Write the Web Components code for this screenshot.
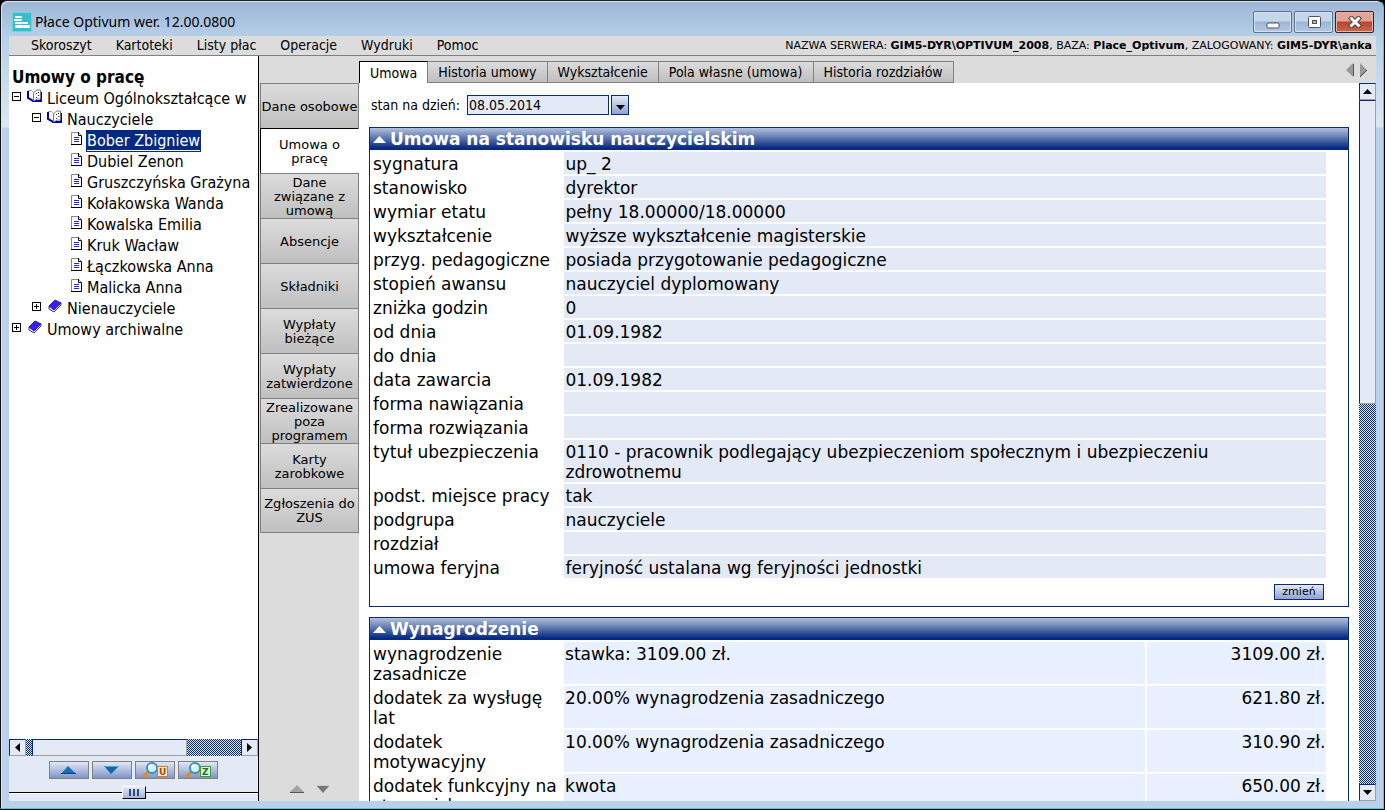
<!DOCTYPE html>
<html lang="pl">
<head>
<meta charset="utf-8">
<title>Płace Optivum</title>
<style>
    html, body {
        height: 100%;
        margin: 0;
    }
    body {
        --navy: #062a82;
        --pale: #e4e9f6;
        --row: #e4e9f6;
        --grey: #dcdcdc;
        --line: #808080;
        background: #000;
        color: #000;
        font-family: "DejaVu Sans", Verdana, sans-serif;
        overflow: hidden;
    }
</style>
</head>
<body>
<payroll-app></payroll-app>

<script>
const define = (name, html, connected) => {
    customElements.define(name, class extends HTMLElement {
        constructor() {
            super();
            this.attachShadow({ mode: 'open' });
            this.shadowRoot.innerHTML = html;
        }

        connectedCallback() {
            if (connected) connected.call(this, this.shadowRoot);
        }
    });
};

// Window frame with the title bar
define('app-window', `
    <style>
    :host {
        display: flex;
        flex-direction: column;
        box-sizing: border-box;
        height: calc(100vh - 1px);
        margin-right: 1px;
        padding: 0 7px 7px 8px;
        border: 1px solid;
        border-color: #222 #3fd0e6 #3fd0e6 #111;
        border-radius: 7px 7px 0 0;
        background: linear-gradient(#9cb6d5, #b6cfe9 36px, #dbe7f4 126px, #b9d1ea 127px);
        box-shadow: inset 1px 1px 0 #d6e4f3;
    }
    header {
        display: flex;
        align-items: center;
        height: 35px;
        padding: 6px 2px 0 3px;
        box-sizing: border-box;
        flex: none;
    }
    h1 {
        flex: 1;
        margin: 0 0 0 3px;
        font: 14px/20px "Noto Sans", sans-serif;
    }
    .buttons {
        display: flex;
        gap: 2px;
    }
    button {
        width: 39px;
        height: 22px;
        padding: 0;
        display: grid;
        place-items: center;
        border: 1px solid #5d7592;
        border-radius: 2px;
        background: linear-gradient(#c4d6ea 0 45%, #9ab5d4 50%, #b5cbe4);
        box-shadow: inset 0 0 0 1px #d3e1f0;
    }
    button.close {
        border-color: #4d1a1c;
        background: linear-gradient(#e1a499 0 45%, #b9432c 50%, #c8694f);
        box-shadow: inset 0 0 0 1px #e8b3a8;
    }
    main {
        flex: 1;
        min-height: 0;
        display: flex;
        flex-direction: column;
        background: #fff;
    }
    </style>
    <header>
        <svg width="20" height="20" viewBox="0 0 20 20">
            <rect width="20" height="20" fill="#6fd3da"/>
            <rect x="1" y="1" width="18" height="18" fill="#39bdc9"/>
            <g fill="#fff">
                <rect x="3" y="4" width="7" height="2" rx="1"/>
                <rect x="2" y="7" width="8" height="2" rx="1"/>
                <rect x="3" y="10" width="7" height="2" rx="1"/>
                <rect x="3" y="13" width="8" height="3" rx="1"/>
                <rect x="10" y="10" width="6" height="2" rx="1"/>
                <rect x="11" y="13" width="7" height="3" rx="1"/>
            </g>
        </svg>
        <h1><slot name="title"></slot></h1>
        <div class="buttons">
            <button aria-label="Minimalizuj"><svg width="14" height="14" viewBox="0 0 14 14"><rect x="1" y="8" width="12" height="5" rx="1" fill="#fff" stroke="#4c5564"/></svg></button>
            <button aria-label="Maksymalizuj"><svg width="14" height="12" viewBox="0 0 14 12"><rect x="1.5" y=".5" width="12" height="11" rx="1" fill="#fff" stroke="#4c5564"/><rect x="5.5" y="4.5" width="4" height="3" fill="#9ab5d4" stroke="#4c5564"/></svg></button>
            <button class="close" aria-label="Zamknij"><svg width="14" height="12" viewBox="0 0 14 12"><path d="M3.5 2.500l7 7M10.5 2.500l-7 7" stroke="#4c4048" stroke-width="5" stroke-linecap="square"/><path d="M3.5 2.500l7 7M10.5 2.500l-7 7" stroke="#fff" stroke-width="3" stroke-linecap="square"/></svg></button>
        </div>
    </header>
    <main><slot></slot></main>
`);

define('menu-bar', `
    <style>
    :host {
        display: flex;
        align-items: center;
        justify-content: space-between;
        flex: none;
        height: 19px;
        padding: 0 4px 0 10px;
        border-bottom: 1px solid var(--line);
        background: var(--grey);
    }
    nav { display: flex; }
    button {
        padding: 0 12px;
        border: 0;
        background: none;
        font: 14px/19px "DejaVu Sans Condensed", Tahoma, sans-serif;
        color: inherit;
    }
    .status { font: 11px/20px "DejaVu Sans", Verdana, sans-serif; white-space: nowrap; }
    </style>
    <nav></nav>
    <div class="status"><slot></slot></div>
`, function (root) {
    root.querySelector('nav').innerHTML = this.getAttribute('items').split('|')
        .map(item => `<button>${item}</button>`).join('');
});

// One line of the tree: level, kind (open, closed, leaf) and the name in the slot
const treeIcons = {
    open: `<svg width="15" height="14" viewBox="0 0 15 14">
        <path d="M1.5 1.500h3l2 2v8l-3-2h-2z" fill="#fff" stroke="#999"/>
        <path d="M1 2v7l2 1 3 2h8V3" fill="none" stroke="#0000b4" stroke-width="2"/>
        <path d="M6.500 4l3-3h4v9h-3l-4 2z" fill="#fff" stroke="#777"/>
        <path d="M9 4.500h1M11 3.500h1M9 8.500h1" stroke="#222"/><path d="M11 6.500h1" stroke="#c00"/></svg>`,
    closed: `<svg width="15" height="14" viewBox="0 0 15 14">
        <path d="M2 7v3l5 3 7-7V4z" fill="#eee" stroke="#33337a"/>
        <path d="M2 7l6-6 6 3-7 7z" fill="#3a1cff" stroke="#2020b0"/></svg>`,
    leaf: `<svg width="12" height="13" viewBox="0 0 12 13">
        <path d="M.5 12.500V.5h7l3 3v9z" fill="#fff" stroke="#888"/>
        <path d="M0 12.500h10.500V4M7.500 0v3.500h3" fill="none" stroke="#000"/>
        <path d="M3 5.500h5M3 7.500h5M3 9.500h5" stroke="#22f"/></svg>`
};

define('tree-item', `
    <style>
    :host {
        display: flex;
        align-items: center;
        height: 21px;
        font: 16px/21px "DejaVu Sans Condensed", Tahoma, sans-serif;
        white-space: nowrap;
    }
    :host([level="1"]) { padding-left: 20px; }
    :host([level="2"]) { padding-left: 40px; }
    .toggle {
        width: 9px;
        height: 9px;
        margin: 0 6px 5px 0;
        padding: 0;
        border: 0;
        background: none;
        display: flex;
        flex: none;
    }
    .icon {
        width: 20px;
        height: 19px;
        display: flex;
        flex: none;
    }
    :host([kind="leaf"]) .toggle { display: none; }
    :host([kind="leaf"]) .icon { width: 16px; margin-left: 19px; height: 17px; }
    a {
        color: inherit;
        text-decoration: none;
        margin-left: -1px;
        padding: 0 1px;
    }
    :host([selected]) a {
        background: var(--navy);
        color: #fff;
        line-height: 22px;
        text-decoration: underline;
        text-decoration-thickness: 1px;
        text-decoration-skip-ink: none;
        text-underline-offset: 4px;
    }
    </style>
    <button class="toggle" aria-label="Rozwiń"></button>
    <span class="icon"></span>
    <a href="#"><slot></slot></a>
`, function (root) {
    const kind = this.getAttribute('kind');
    root.querySelector('.icon').innerHTML = treeIcons[kind];
    root.querySelector('.toggle').innerHTML = `<svg width="9" height="9" viewBox="0 0 9 9">
        <rect x=".5" y=".5" width="8" height="8" fill="#fff" stroke="#000"/>
        <path d="M2 4.500h5${kind === 'closed' ? 'M4.500 2v5' : ''}" stroke="#000"/></svg>`;
});

define('scroll-bar', `
    <style>
    :host {
        display: flex;
        flex: none;
        background: url("data:image/svg+xml,%3Csvg xmlns='http://www.w3.org/2000/svg' width='2' height='2'%3E%3Cpath fill='%23dce5f6' d='M0 0h2v2H0z'/%3E%3Cpath fill='%23062a82' d='M0 0h1v1H0zM1 1h1v1H1z'/%3E%3C/svg%3E");
    }
    :host([vertical]) { flex-direction: column; }
    button, .thumb {
        box-sizing: border-box;
        border: 1px solid;
        border-color: var(--navy) #a0a0a0 #a0a0a0 var(--navy);
        background: var(--pale);
    }
    button {
        width: 17px;
        height: 17px;
        padding: 0;
        flex: none;
        display: grid;
        place-items: center;
    }
    .space { flex: 0 0 var(--start, 0); }
    .thumb { flex: 0 0 var(--size); }
    .after { flex: 1; }
    .turn { transform: rotate(180deg); }
    :host(:not([vertical])) svg { rotate: -90deg; }
    </style>
    <button aria-label="Wstecz"><svg width="9" height="5" viewBox="0 0 9 5"><path d="M0 5L4.500 0 9 5z"/></svg></button>
    <div class="space"></div>
    <div class="thumb"></div>
    <div class="after"></div>
    <button aria-label="Dalej"><svg class="turn" width="9" height="5" viewBox="0 0 9 5"><path d="M0 5L4.500 0 9 5z"/></svg></button>
`);

define('tree-panel', `
    <style>
    :host {
        display: flex;
        flex-direction: column;
        flex: none;
        width: 249px;
        border-right: 1px solid #000;
        background: var(--pale);
    }
    .tree {
        flex: 1;
        min-height: 0;
        padding: 10px 0 0 3px;
        overflow: hidden;
        background: #fff;
    }
    h2 {
        margin: 0;
        font: bold 17px/22px "DejaVu Sans Condensed", Tahoma, sans-serif;
    }
    scroll-bar { --start: 6px; --size: 155px; }
    .tools {
        display: flex;
        justify-content: center;
        gap: 3px;
        padding: 5px 0;
    }
    .tools button {
        width: 40px;
        height: 18px;
        padding: 0;
        display: grid;
        place-items: center;
        border: 1px solid var(--line);
        background: linear-gradient(#e2e7f5, #7f95c8);
    }
    .splitter {
        display: flex;
        align-items: center;
        justify-content: center;
        height: 17px;
        background: linear-gradient(#000, #000) 0 8px / 100% 1px no-repeat,
            linear-gradient(#fff, #fff) 0 9px / 100% 1px no-repeat;
    }
    .splitter button {
        width: 24px;
        height: 13px;
        padding: 0;
        display: grid;
        place-items: center;
        border: 1px solid;
        border-color: #fff #000 #000 #fff;
        background: linear-gradient(#e2e7f5, #a5b6da);
    }
    </style>
    <div class="tree">
        <h2><slot name="heading"></slot></h2>
        <slot></slot>
    </div>
    <scroll-bar></scroll-bar>
    <div class="tools">
        <button aria-label="Poprzedni"><svg width="16" height="8" viewBox="0 0 16 8"><path d="M0 8L7 0l8 8z" fill="#0f72b8"/><path d="M0 7.500h15" stroke="#123f7a"/></svg></button>
        <button aria-label="Następny"><svg width="16" height="8" viewBox="0 0 16 8"><path d="M0 0l7 8 8-8z" fill="#0f66a8"/><path d="M0 .5h15" stroke="#4aa6da"/></svg></button>
        <button aria-label="Szukaj umowy"><svg width="26" height="16" viewBox="0 0 26 16">
            <path d="M1 16l5-6" stroke="#e0862a" stroke-width="3"/><circle cx="10" cy="6" r="5" fill="#d5f1fa" stroke="#3a92b6" stroke-width="2"/><path d="M7 6q0-3 3-3" fill="none" stroke="#fff" stroke-width="2"/>
            <rect x="15.500" y="4.500" width="10" height="10" fill="#fbe3c4" stroke="#e8781c"/><text x="17" y="13" font-family="DejaVu Sans" font-weight="bold" font-size="9" fill="#a04c10">U</text></svg></button>
        <button aria-label="Szukaj zatrudnionego"><svg width="26" height="16" viewBox="0 0 26 16">
            <path d="M1 16l5-6" stroke="#e0862a" stroke-width="3"/><circle cx="10" cy="6" r="5" fill="#d5f1fa" stroke="#3a92b6" stroke-width="2"/><path d="M7 6q0-3 3-3" fill="none" stroke="#fff" stroke-width="2"/>
            <rect x="15.500" y="4.500" width="10" height="10" fill="#e2f2d8" stroke="#3f9a3a"/><text x="17" y="13" font-family="DejaVu Sans" font-weight="bold" font-size="9" fill="#236a28">Z</text></svg></button>
    </div>
    <div class="splitter"><button aria-label="Zmień wysokość"><svg width="12" height="8" viewBox="0 0 12 8"><path d="M2 0v7M6 0v7M10 0v7" stroke="#34477e" stroke-width="2"/></svg></button></div>
`);

define('side-nav', `
    <style>
    :host {
        display: flex;
        flex-direction: column;
        flex: none;
        width: 100px;
        padding-top: 27px;
        background: var(--grey);
    }
    nav {
        flex: 1;
        padding-left: 1px;
    }
    button {
        display: block;
        box-sizing: border-box;
        width: 99px;
        height: 45px;
        padding: 1px 0 0;
        border: 1px solid var(--line);
        border-bottom-width: 0;
        background: linear-gradient(#dcdcdc, #bfbfbf);
        color: inherit;
        font: 13px/14px "DejaVu Sans", Verdana, sans-serif;
    }
    button:last-child { border-bottom-width: 1px; }
    button.active {
        border-color: #000 #fff #fff #000;
        background: #fff;
    }
    .arrows {
        display: flex;
        justify-content: center;
        gap: 12px;
        padding: 0 0 8px 2px;
    }
    </style>
    <nav></nav>
    <div class="arrows">
        <svg width="14" height="8" viewBox="0 0 14 8"><path d="M0 7l7-7 7 7z" fill="#a4a4a4"/><path d="M0 7.500h14" stroke="#555"/></svg>
        <svg width="14" height="8" viewBox="0 0 14 8"><path d="M0 0l7 8 7-8z" fill="#777"/><path d="M0 .5h14" stroke="#ccc"/></svg>
    </div>
`, function (root) {
    root.querySelector('nav').innerHTML = this.getAttribute('items').split('|')
        .map((item, i) => `<button class="${i === 1 ? 'active' : ''}">${item}</button>`).join('');
});

define('tab-bar', `
    <style>
    :host {
        display: flex;
        justify-content: space-between;
        align-items: center;
        flex: none;
        height: 27px;
        padding-right: 8px;
        background: var(--grey);
    }
    .tabs {
        display: flex;
        align-self: flex-end;
        align-items: flex-end;
    }
    button {
        box-sizing: border-box;
        height: 22px;
        padding: 0 10px;
        border: 1px solid var(--line);
        border-left-width: 0;
        background: linear-gradient(#dcdcdc, #bfbfbf);
        color: inherit;
        font: 14px/20px "DejaVu Sans Condensed", Tahoma, sans-serif;
        white-space: nowrap;
    }
    button.active {
        border-width: 1px 1px 0 1px;
        border-color: #000 var(--line) #fff #000;
        background: #fff;
    }
    svg { display: block; }
    </style>
    <div class="tabs" role="tablist"></div>
    <svg width="22" height="14" viewBox="0 0 22 14">
        <path d="M7 0v14L0 7z" fill="#999"/><path d="M7.500 1v12" stroke="#555"/>
        <path d="M14 0v14l7-7z" fill="#999"/><path d="M14 14l7-7" stroke="#444"/></svg>
`, function (root) {
    root.querySelector('.tabs').innerHTML = this.getAttribute('items').split('|')
        .map((item, i) => `<button role="tab" class="${i ? '' : 'active'}">${item}</button>`).join('');
});

define('date-picker', `
    <style>
    :host {
        display: flex;
        align-items: center;
        gap: 2px;
        font: 14px/18px "DejaVu Sans Condensed", Tahoma, sans-serif;
    }
    label { margin: 0 5px 0 2px; }
    input {
        box-sizing: border-box;
        width: 142px;
        height: 20px;
        padding: 0 1px;
        border: 1px solid var(--navy);
        background: var(--pale);
        color: inherit;
        font: 14px/18px "DejaVu Sans Condensed", Tahoma, sans-serif;
    }
    button {
        width: 18px;
        height: 20px;
        padding: 5px 0 0;
        display: grid;
        place-items: center;
        border: 1px solid var(--navy);
        background: linear-gradient(#e4e9f6, #8fa2d0);
    }
    </style>
    <label for="day"><slot></slot></label>
    <input id="day" type="text" value="08.05.2014">
    <button aria-label="Kalendarz"><svg width="9" height="5" viewBox="0 0 9 5"><path d="M0 0h9L4.500 5z"/></svg></button>
`);

define('data-panel', `
    <style>
    :host {
        display: block;
        border: 1px solid var(--navy);
        background: #fff;
    }
    h2 {
        display: flex;
        align-items: center;
        gap: 4px;
        height: 22px;
        margin: 0;
        padding-left: 3px;
        background: linear-gradient(#b3c2dd, var(--navy) 20px);
        color: #fff;
        font: bold 17px/22px "DejaVu Sans", Verdana, sans-serif;
    }
    </style>
    <h2><svg width="13" height="7" viewBox="0 0 13 7"><path d="M0 7l6.500-7L13 7z" fill="#fff"/></svg><slot name="heading"></slot></h2>
    <slot></slot>
`);

define('record-table', `
    <style>
    :host { display: block; }
    table {
        width: 98%;
        table-layout: fixed;
        border-spacing: 2px;
        font: 17px/20px "DejaVu Sans", Verdana, sans-serif;
    }
    col.label { width: 20%; }
    col.amount { width: 179px; }
    th {
        padding: 2px 4px 0 1px;
        font-weight: normal;
        text-align: left;
        vertical-align: top;
    }
    td {
        height: 20px;
        padding: 2px 1px 0;
        vertical-align: top;
        background: var(--row);
    }
    td + td { text-align: right; }
    </style>
    <table></table>
`, function (root) {
    const rows = this.textContent.trim().split('\n').map(line => line.split('|').map(cell => cell.trim()));
    root.querySelector('table').innerHTML =
        `<colgroup><col class="label"><col>${rows[0].length > 2 ? '<col class="amount">' : ''}</colgroup>` +
        rows.map(([label, ...cells]) =>
            `<tr><th scope="row">${label}</th>${cells.map(cell => `<td>${cell}</td>`).join('')}</tr>`).join('');
});

define('payroll-app', `
    <style>
    :host { display: block; }
    .columns {
        flex: 1;
        min-height: 0;
        display: flex;
    }
    .work {
        flex: 1;
        min-width: 0;
        display: flex;
        flex-direction: column;
    }
    .body {
        flex: 1;
        min-height: 0;
        display: flex;
    }
    .page {
        flex: 1;
        min-width: 0;
        overflow: hidden;
        padding: 12px 10px 0;
    }
    date-picker { margin-bottom: 12px; }
    data-panel { margin-bottom: 10px; }
    data-panel.pay { --row: #e9f0ff; }
    .body > scroll-bar { --size: 304px; }
    .actions {
        display: flex;
        justify-content: flex-end;
        padding: 4px 24px 6px 0;
    }
    .actions button {
        width: 50px;
        height: 16px;
        padding: 0;
        border: 1px solid var(--navy);
        background: linear-gradient(#e4e9f6, #8fa2d0);
        color: inherit;
        font: 11px/14px "DejaVu Sans", Verdana, sans-serif;
    }
    </style>
    <app-window>
        <span slot="title">Płace Optivum wer. 12.00.0800</span>
        <menu-bar items="Skoroszyt|Kartoteki|Listy płac|Operacje|Wydruki|Pomoc">NAZWA SERWERA: <b>GIM5-DYR\\OPTIVUM_2008</b>, BAZA: <b>Place_Optivum</b>, ZALOGOWANY: <b>GIM5-DYR\\anka</b></menu-bar>
        <div class="columns">
            <tree-panel>
                <span slot="heading">Umowy o pracę</span>
                <tree-item kind="open">Liceum Ogólnokształcące w</tree-item>
                <tree-item kind="open" level="1">Nauczyciele</tree-item>
                <tree-item kind="leaf" level="2" selected>Bober Zbigniew</tree-item>
                <tree-item kind="leaf" level="2">Dubiel Zenon</tree-item>
                <tree-item kind="leaf" level="2">Gruszczyńska Grażyna</tree-item>
                <tree-item kind="leaf" level="2">Kołakowska Wanda</tree-item>
                <tree-item kind="leaf" level="2">Kowalska Emilia</tree-item>
                <tree-item kind="leaf" level="2">Kruk Wacław</tree-item>
                <tree-item kind="leaf" level="2">Łączkowska Anna</tree-item>
                <tree-item kind="leaf" level="2">Malicka Anna</tree-item>
                <tree-item kind="closed" level="1">Nienauczyciele</tree-item>
                <tree-item kind="closed">Umowy archiwalne</tree-item>
            </tree-panel>
            <side-nav items="Dane osobowe|Umowa o pracę|Dane związane z umową|Absencje|Składniki|Wypłaty bieżące|Wypłaty zatwierdzone|Zrealizowane poza programem|Karty zarobkowe|Zgłoszenia do ZUS"></side-nav>
            <div class="work">
                <tab-bar items="Umowa|Historia umowy|Wykształcenie|Pola własne (umowa)|Historia rozdziałów"></tab-bar>
                <div class="body">
                    <div class="page">
                        <date-picker>stan na dzień:</date-picker>
                        <data-panel>
                            <span slot="heading">Umowa na stanowisku nauczycielskim</span>
                            <record-table>
                                sygnatura|up_ 2
                                stanowisko|dyrektor
                                wymiar etatu|pełny 18.00000/18.00000
                                wykształcenie|wyższe wykształcenie magisterskie
                                przyg. pedagogiczne|posiada przygotowanie pedagogiczne
                                stopień awansu|nauczyciel dyplomowany
                                zniżka godzin|0
                                od dnia|01.09.1982
                                do dnia|
                                data zawarcia|01.09.1982
                                forma nawiązania|
                                forma rozwiązania|
                                tytuł ubezpieczenia|0110 - pracownik podlegający ubezpieczeniom społecznym i ubezpieczeniu zdrowotnemu
                                podst. miejsce pracy|tak
                                podgrupa|nauczyciele
                                rozdział|
                                umowa feryjna|feryjność ustalana wg feryjności jednostki
                            </record-table>
                            <div class="actions"><button>zmień</button></div>
                        </data-panel>
                        <data-panel class="pay">
                            <span slot="heading">Wynagrodzenie</span>
                            <record-table>
                                wynagrodzenie zasadnicze|stawka: 3109.00 zł.|3109.00 zł.
                                dodatek za wysługę lat|20.00% wynagrodzenia zasadniczego|621.80 zł.
                                dodatek motywacyjny|10.00% wynagrodzenia zasadniczego|310.90 zł.
                                dodatek funkcyjny na stanowisku|kwota|650.00 zł.
                            </record-table>
                        </data-panel>
                    </div>
                    <scroll-bar vertical></scroll-bar>
                </div>
            </div>
        </div>
    </app-window>
`);
</script>
</body>
</html>
